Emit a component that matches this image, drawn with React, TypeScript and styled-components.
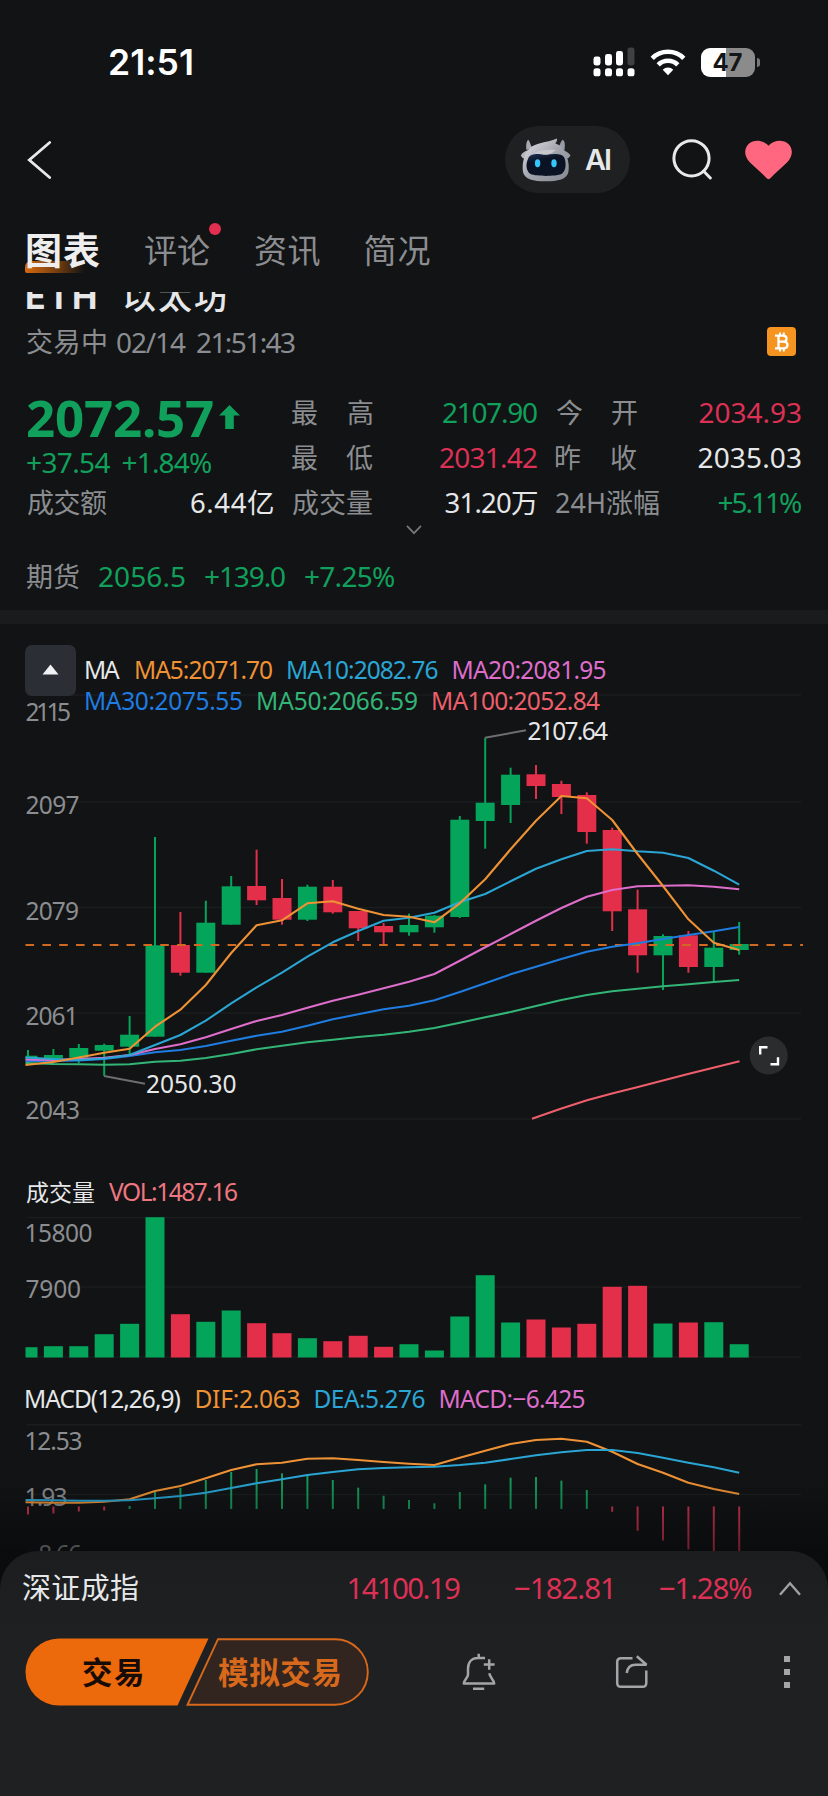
import React from 'react';
import styled, { createGlobalStyle } from 'styled-components';

const FONT = "'Noto Sans', 'Noto Sans CJK SC', sans-serif";
const UI_FONT = "Inter, 'Noto Sans', sans-serif";

const c = {
  bg: '#111314',
  sheet: '#1e2022',
  text: '#e6e7e9',
  muted: '#8b8d90',
  up: '#11a05c',
  down: '#dc3055',
  upFill: '#04a45a',
  downFill: '#e42f4a',
  orange: '#ef9235',
  cyan: '#2aa5d4',
  pink: '#de6dcb',
  blue: '#1f7ce0',
  green: '#33b577',
  red: '#ee5f6b',
  brand: '#ec690c',
  grid: '#1b1d1e',
};

const GlobalStyle = createGlobalStyle`
  html, body { margin: 0; padding: 0; background: ${c.bg}; }
  * { box-sizing: border-box; }
`;

/* ---------- text tracked to an exact ink width ---------- */

let ctx: CanvasRenderingContext2D | null = null;

function track(text: string, size: number, weight: number, family: string, width: number) {
  if (!ctx) ctx = document.createElement('canvas').getContext('2d');
  if (!ctx) return { spacing: 0, left: 0, right: 0 };
  ctx.font = `${weight} ${size}px ${family}`;
  const m = ctx.measureText(text);
  const ink = m.actualBoundingBoxLeft + m.actualBoundingBoxRight;
  const spacing = text.length > 1 ? (width - ink) / (text.length - 1) : 0;
  return {
    spacing,
    left: m.actualBoundingBoxLeft,
    right: -(m.width - m.actualBoundingBoxRight) - spacing,
  };
}

const Glyphs = styled.span<{ $size: number; $weight: number; $color: string; $family: string }>`
  display: block;
  flex: none;
  white-space: pre;
  font-family: ${(p) => p.$family};
  font-size: ${(p) => p.$size}px;
  font-weight: ${(p) => p.$weight};
  color: ${(p) => p.$color};
`;

type TextProps = {
  children: string;
  w: number;
  size?: number;
  weight?: number;
  color?: string;
  family?: string;
};

function Text({ children, w, size = 28, weight = 400, color = c.text, family = FONT }: TextProps) {
  const t = track(children, size, weight, family, w);
  return (
    <Glyphs
      $size={size}
      $weight={weight}
      $color={color}
      $family={family}
      style={{ letterSpacing: t.spacing, marginLeft: t.left, marginRight: t.right }}
    >
      {children}
    </Glyphs>
  );
}

function PlotText({ x, y, w, children, color = c.muted }: { x: number; y: number; w: number; children: string; color?: string }) {
  const t = track(children, 24.5, 400, FONT, w);
  return (
    <text x={x + t.left} y={y} fill={color} fontFamily={FONT} fontSize={24.5} style={{ letterSpacing: t.spacing }}>
      {children}
    </text>
  );
}

/* ---------- page parts ---------- */

const Page = styled.div`
  position: relative;
  width: 828px;
  height: 1796px;
  overflow: hidden;
  background: ${c.bg};
  color: ${c.text};
  font-family: ${FONT};
`;

const StatusBar = styled.header`
  display: flex;
  align-items: center;
  justify-content: space-between;
  height: 124px;
  padding: 0 68px 0 110px;
`;

const StatusIcons = styled.div`
  display: flex;
  align-items: center;
  gap: 15px;
`;

const Battery = styled.div`
  position: relative;
  display: flex;
  align-items: center;
  justify-content: center;
  width: 54px;
  height: 29px;
  margin-right: 5px;
  border-radius: 9px;
  background: linear-gradient(90deg, #fff 0 47%, #8b8b8b 47% 100%);
  &::after {
    content: '';
    position: absolute;
    right: -5px;
    top: 10px;
    width: 3px;
    height: 9px;
    border-radius: 0 4px 4px 0;
    background: #77797a;
  }
`;

const NavBar = styled.nav`
  display: flex;
  align-items: center;
  height: 67px;
  margin-top: 2px;
  padding: 0 36px 0 27px;
`;

const Spacer = styled.div`
  flex: 1;
`;

const AiPill = styled.div`
  display: flex;
  align-items: center;
  gap: 14px;
  width: 125px;
  height: 67px;
  margin-right: 42px;
  padding-left: 15px;
  border-radius: 34px;
  background: #1e2021;
`;

const HeartSlot = styled.div`
  display: flex;
  margin-left: 32px;
`;

const Tabs = styled.div`
  display: flex;
  align-items: center;
  height: 99px;
  padding: 16px 0 0 26px;
  line-height: 50px;
`;

const Tab = styled.div<{ $gap: number }>`
  position: relative;
  margin-right: ${(p) => p.$gap}px;
`;

const TabLine = styled.i`
  position: absolute;
  left: -1px;
  top: 35px;
  width: 60px;
  height: 12px;
  border-radius: 6px 0 0 2px;
  background: linear-gradient(90deg, #d8690f, #7b410f 50%, rgba(17, 19, 20, 0));
`;

const TabLabel = styled.div`
  position: relative;
  padding-left: 1px;
`;

const Dot = styled.i`
  position: absolute;
  right: -11px;
  top: -3px;
  width: 12px;
  height: 12px;
  border-radius: 50%;
  background: #e22f50;
`;

const Quote = styled.section`
  height: 318px;
  overflow: hidden;
  padding: 0 27px;
`;

const TitleRow = styled.div`
  display: flex;
  gap: 28px;
  height: 40px;
  margin-top: -15px;
  line-height: 39px;
`;

const StateRow = styled.div`
  display: flex;
  align-items: center;
  justify-content: space-between;
  height: 49px;
  padding-right: 5px;
  line-height: 36px;
`;

const Inline = styled.div<{ $gap: number }>`
  display: flex;
  align-items: center;
  gap: ${(p) => p.$gap}px;
`;

const CoinBadge = styled.div`
  display: flex;
  align-items: center;
  justify-content: center;
  width: 29px;
  height: 29px;
  border-radius: 4px;
  background: #f59420;
`;

const Stats = styled.div`
  display: grid;
  grid-template-columns: 246px 245px 245px;
  grid-template-rows: 45px 45px 45px;
  column-gap: 19px;
  margin-top: 24px;
  line-height: 45px;
`;

const PriceBlock = styled.div`
  grid-row: span 2;
`;

const PriceRow = styled.div`
  display: flex;
  align-items: center;
  gap: 6px;
  height: 54px;
  line-height: 52px;
`;

const ChangeRow = styled.div`
  display: flex;
  align-items: center;
  height: 36px;
  line-height: 35px;
`;

const Stat = styled.div`
  display: flex;
  justify-content: space-between;
`;

const SplitLabel = styled.div`
  display: flex;
  justify-content: space-between;
  width: 81px;
`;

const MoreRow = styled.div`
  display: flex;
  justify-content: center;
  height: 10px;
`;

const FuturesRow = styled.div`
  display: flex;
  align-items: center;
  gap: 20px;
  padding-top: 6px;
  height: 75px;
`;

const Divider = styled.div`
  height: 14px;
  background: #1a1b1d;
`;

const PricePane = styled.section`
  display: grid;
  & > * {
    grid-area: 1 / 1;
  }
`;

const Plot = styled.svg`
  display: block;
`;

const Legend = styled.div`
  position: relative;
  display: flex;
  align-items: flex-start;
  gap: 10px;
  padding: 21px 0 0 25px;
`;

const ToggleButton = styled.button`
  display: flex;
  align-items: center;
  justify-content: center;
  width: 51px;
  height: 51px;
  padding: 0 0 2px;
  border: 0;
  border-radius: 7px;
  background: #2b2e34;
`;

const LegendLines = styled.div`
  display: flex;
  flex-direction: column;
  padding-top: 9px;
  line-height: 31px;
`;

const LegendLine = styled.div`
  display: flex;
  gap: 16px;
`;

const LegendBar = styled.div<{ $gap: number }>`
  display: flex;
  align-items: center;
  gap: ${(p) => p.$gap}px;
  height: 36px;
  padding-left: 26px;
  line-height: 36px;
`;

const Sheet = styled.footer`
  position: absolute;
  left: 0;
  right: 0;
  bottom: 0;
  height: 245px;
  border-radius: 38px 38px 0 0;
  background: linear-gradient(180deg, #1b1d1e, ${c.sheet} 80px);
`;

const SheetShade = styled.div`
  position: absolute;
  left: 0;
  right: 0;
  bottom: 200px;
  height: 120px;
  background: linear-gradient(180deg, rgba(3, 4, 6, 0), rgba(3, 4, 6, 0.5) 65%);
`;

const IndexRow = styled.div`
  display: flex;
  align-items: center;
  height: 74px;
  padding: 0 26px 0 23px;
  line-height: 38px;
`;

const IndexValues = styled.div`
  display: flex;
  align-items: center;
  margin-left: auto;
`;

const Gap = styled.div<{ $w: number }>`
  width: ${(p) => p.$w}px;
  flex: none;
`;

const ActionRow = styled.div`
  display: flex;
  align-items: center;
  height: 67px;
  margin-top: 13px;
  padding-left: 25px;
`;

const TradeButtons = styled.div`
  display: grid;
  width: 345px;
  height: 68px;
  & > * {
    grid-area: 1 / 1;
  }
`;

const TradeLabels = styled.div`
  position: relative;
  display: flex;
  align-items: center;
  gap: 76px;
  padding-left: 58px;
  line-height: 66px;
`;

/* ---------- chart data: pixel levels inside the plots ---------- */

const step = 25.4;
const cx = (i: number) => 155 + (i - 5) * step;

// [wick top, body top, body bottom, wick bottom, rising]
const candles: [number, number, number, number, 0 | 1][] = [
  [1050, 1055.7, 1060, 1063, 1], [1049, 1055, 1058.5, 1060, 1], [1044, 1048, 1057.7, 1063, 1],
  [1043.7, 1045, 1050.7, 1076, 1], [1016, 1034.7, 1046.7, 1055, 1], [837, 945.3, 1036.7, 1036.7, 1],
  [912, 945, 972.7, 975.7, 0], [900.7, 922.7, 972.7, 972.7, 1], [876, 886.3, 924.7, 924.7, 1],
  [849.7, 886, 900.3, 905, 0], [879, 898, 919.7, 924.7, 0], [884.7, 886.7, 919.7, 921, 1],
  [880, 886.7, 912.3, 913.7, 0], [911, 911, 928.3, 941, 0], [923, 926, 932.3, 944.3, 0],
  [913.7, 925, 932.3, 935.7, 1], [915, 915.7, 927.3, 932.7, 1], [816, 819.7, 917, 918, 1],
  [737.7, 802.7, 821, 848.7, 1], [767.7, 774.7, 805, 823, 1], [765, 774.3, 786, 799, 0],
  [780.7, 784, 797, 814, 0], [792.3, 795, 832, 843.7, 0], [827.7, 830, 911.3, 931, 0],
  [889.7, 909.3, 955.3, 972.7, 0], [934.3, 936, 955.3, 990, 1], [931, 935.3, 967, 972.7, 0],
  [931.7, 947.7, 967, 981.7, 1], [922, 944, 950, 954.7, 1],
];

const ma5 = [1065, 1062, 1057.5, 1052.7, 1048.7, 1026.7, 1009.7, 985, 953, 925.3, 920.3, 903.3, 901.3, 908.7, 915, 916.7, 922.3, 903.3, 879.3, 849.3, 820.7, 796, 798.3, 820, 854, 886, 919.3, 942.7, 950];
const ma10 = [1057.5, 1059, 1060, 1058.5, 1055, 1045, 1035, 1020.7, 1003.3, 987.3, 972.7, 956.7, 942.3, 931, 920.7, 917.7, 912.7, 902.3, 894, 881.3, 868.7, 859.3, 851, 849.3, 851.3, 852.7, 858, 870.7, 884.7];
const ma20 = [1059.5, 1060, 1059, 1057.7, 1055, 1049, 1044.3, 1037.3, 1029, 1021, 1015, 1007.7, 1000.7, 994.7, 988.3, 981.7, 974, 960.7, 947.3, 934, 920.7, 908, 896.7, 890, 886.3, 885.7, 885.3, 886.7, 889.3];
const ma30 = [1061, 1061, 1060.5, 1059, 1056, 1052.3, 1050, 1046, 1040.7, 1035.7, 1031.7, 1025.7, 1019.3, 1014.3, 1009.3, 1005.7, 1000.3, 992, 983.3, 974.3, 966.7, 959, 951.7, 946.7, 943.3, 939, 935, 931.3, 927];
const ma50 = [1063, 1064, 1064.3, 1064.7, 1064.3, 1061.7, 1060.7, 1058, 1054, 1049.3, 1045.7, 1042.3, 1039.7, 1037, 1034.7, 1031.7, 1028, 1022.7, 1017.3, 1012, 1006, 1000, 995, 991.3, 988.7, 986.3, 984.3, 982, 980];

const volume: [number, 0 | 1][] = [
  [10.3, 1], [11.3, 1], [11.3, 1], [23.3, 1], [33.7, 1], [140.3, 1], [43.3, 0], [35.7, 1], [47, 1], [34.3, 0],
  [24.3, 0], [19.3, 1], [16.3, 0], [21.7, 0], [10.7, 0], [13.3, 1], [7, 1], [41, 1], [82.3, 1], [35, 1],
  [38, 0], [30, 0], [33.7, 0], [70.7, 0], [71.7, 0], [34, 1], [35, 0], [35.3, 1], [13.3, 1],
];

const macd = [-8, -7, -5, -4, 3, 17, 21, 29, 37, 40, 35.7, 34, 29, 21.3, 13.3, 9, 5.7, 17, 24.7, 31.3, 32, 28.3, 19, -5.3, -24.3, -34, -43, -52, -60];
const dif = [1502.3, 1502.7, 1502.7, 1501.7, 1499.3, 1491, 1486, 1478.3, 1470, 1464.3, 1462.7, 1458.7, 1458.3, 1460, 1462, 1463.7, 1465, 1457.7, 1450.7, 1444, 1440, 1438.7, 1441.7, 1451.7, 1464, 1472.7, 1482.7, 1489, 1494];
const dea = [1500, 1500.3, 1500.7, 1500.7, 1500.3, 1498.3, 1496, 1492.7, 1488, 1483.3, 1479.3, 1475, 1472, 1469.3, 1468, 1467.3, 1466.7, 1465, 1462.7, 1459, 1455.3, 1452.3, 1450, 1450, 1453, 1457.7, 1462.7, 1467.3, 1472.7];

function Line({ data, color }: { data: number[]; color: string }) {
  const pts = data.map((y, i) => `${(i === 0 ? 25.5 : cx(i)).toFixed(1)},${y}`).join(' ');
  return <polyline points={pts} fill="none" stroke={color} strokeWidth={2.1} strokeLinejoin="round" />;
}

const bodyX = (i: number) => Math.max(25.5, cx(i) - 9.5);
const bodyW = (i: number) => cx(i) + 9.5 - bodyX(i);

function GridLines({ ys }: { ys: number[] }) {
  return (
    <>
      {ys.map((y) => (
        <line key={y} x1={27} x2={801} y1={y} y2={y} stroke={c.grid} strokeWidth={1.5} />
      ))}
    </>
  );
}

function PricePlot() {
  return (
    <Plot width={828} height={550} viewBox="0 624 828 550">
      <GridLines ys={[695, 802, 907.5, 1013, 1119]} />
      <PlotText x={26.5} y={720.5} w={43.5}>2115</PlotText>
      <PlotText x={26.5} y={813.5} w={52}>2097</PlotText>
      <PlotText x={26.5} y={919.5} w={51.5}>2079</PlotText>
      <PlotText x={26.5} y={1025} w={47}>2061</PlotText>
      <PlotText x={26.5} y={1118.5} w={52.5}>2043</PlotText>
      {candles.map(([wt, bt, bb, wb, rising], i) => {
        const fill = rising ? c.upFill : c.downFill;
        return (
          <g key={i} fill={fill}>
            <rect x={cx(i) - 1} y={wt} width={2} height={wb - wt} />
            <rect x={bodyX(i)} y={bt} width={bodyW(i)} height={bb - bt} />
          </g>
        );
      })}
      <line x1={25.5} x2={803} y1={945} y2={945} stroke="#cf6a20" strokeWidth={1.8} strokeDasharray="8.6 8.24" />
      <Line data={ma50} color={c.green} />
      <Line data={ma30} color={c.blue} />
      <Line data={ma20} color={c.pink} />
      <Line data={ma10} color={c.cyan} />
      <Line data={ma5} color={c.orange} />
      <polyline points="532,1118.7 560,1109 587,1100.3 612,1093.5 637,1087.3 688,1074 739.5,1061.3" fill="none" stroke={c.red} strokeWidth={2.1} />
      <polyline points="485,737.7 526,730.3" stroke="#6c6e70" strokeWidth={1.9} />
      <polyline points="104,1076 145,1083.7" stroke="#6c6e70" strokeWidth={1.9} />
      <PlotText x={528.5} y={739.5} w={79.5} color={c.text}>2107.64</PlotText>
      <PlotText x={147} y={1093} w={88.5} color={c.text}>2050.30</PlotText>
      <circle cx={768.7} cy={1055.5} r={19} fill="#2b2c2e" />
      <path d="M760.2 1054.5V1047.2H767.5M778 1057.3V1064.3H770.5" fill="none" stroke="#fff" strokeWidth={2.4} />
    </Plot>
  );
}

function VolumePlot() {
  return (
    <Plot width={828} height={171} viewBox="0 1210 828 171">
      <GridLines ys={[1217.5, 1287, 1357]} />
      {volume.map(([h, rising], i) => (
        <rect key={i} x={bodyX(i)} y={1357.5 - h} width={bodyW(i)} height={h} fill={rising ? c.upFill : c.downFill} />
      ))}
      <PlotText x={26.5} y={1241.5} w={65}>15800</PlotText>
      <PlotText x={26.5} y={1298} w={53.5}>7900</PlotText>
    </Plot>
  );
}

function MacdPlot() {
  return (
    <Plot width={828} height={183} viewBox="0 1417 828 183">
      <GridLines ys={[1424.7, 1494.5]} />
      <PlotText x={26.5} y={1449.5} w={55}>12.53</PlotText>
      <PlotText x={26.5} y={1505.5} w={40}>1.93</PlotText>
      <PlotText x={27} y={1562.5} w={54}>−8.66</PlotText>
      {macd.map((v, i) => (
        <rect
          key={i}
          x={cx(i) - 1}
          y={v > 0 ? 1509 - v : 1506.5}
          width={2}
          height={Math.abs(v)}
          fill={v > 0 ? '#15995a' : '#cf3450'}
        />
      ))}
      <Line data={dif} color={c.orange} />
      <Line data={dea} color={c.cyan} />
    </Plot>
  );
}

/* ---------- icons ---------- */

const Signal = () => (
  <svg width="42" height="30" viewBox="0 0 42 30" fill="#fff">
    <rect x="0.5" y="9.5" width="7" height="9" rx="2.4" />
    <rect x="12" y="7" width="7" height="11.5" rx="2.4" />
    <rect x="23" y="4" width="7" height="14.5" rx="2.4" />
    <rect x="34.5" y="0.5" width="7" height="18" rx="2.4" fill="#3f4142" />
    {[0.5, 12, 23, 34.5].map((x) => (
      <rect key={x} x={x} y="21.3" width="7" height="8" rx="2.6" />
    ))}
  </svg>
);

const Wifi = () => (
  <svg width="36" height="28" viewBox="0 0 36 28" fill="none" stroke="#fff" strokeWidth="4.6">
    <path d="M2.2 10.3A22.5 22.5 0 0 1 33.8 10.3" />
    <path d="M8.2 16.8A14 14 0 0 1 27.8 16.8" />
    <path d="M12.7 21.7A7.8 7.8 0 0 1 23.3 21.7L18 27.2Z" fill="#fff" stroke="none" />
  </svg>
);

const Robot = () => (
  <svg width="51" height="46" viewBox="0 0 51 46">
    <defs>
      <linearGradient id="head" x1="0" y1="0" x2="1" y2="1">
        <stop offset="0" stopColor="#e4e5ea" />
        <stop offset="0.5" stopColor="#a2a5ad" />
        <stop offset="1" stopColor="#858992" />
      </linearGradient>
      <linearGradient id="visor" x1="0" y1="0" x2="0.4" y2="1">
        <stop offset="0" stopColor="#1d3152" />
        <stop offset="0.4" stopColor="#0a1223" />
        <stop offset="1" stopColor="#0b1424" />
      </linearGradient>
    </defs>
    <path d="M6.5 13C5.7 8 6.5 4 8.3 2.7C10.3 4.5 10.2 8 12.5 11Z" fill="#a6a9b0" />
    <path d="M38 10C40.6 8 40.2 4 43 2.7C45.4 5 45 9 44.5 13Z" fill="#989ba3" />
    <path d="M0.8 18.5C2.3 15.5 5 14 9 13L6 22L2.5 21Z" fill="#b5b7bd" />
    <path d="M50.5 18.5C48.5 15.5 46 14 42 13L45 22L48.5 21Z" fill="#999ca4" />
    <path d="M9 12C15 5.5 26 6 37 1.5C37.3 4 36.3 5.5 35.2 6.3C41 8.3 45.5 13 47 20C48.6 25 49.3 30 48.4 35C47 42.5 38 44.3 25.6 44.3C13.5 44.3 4.5 42.5 3 35C2.2 30 2.8 25 4.3 20C5.2 16.5 6.8 14.2 9 12Z" fill="url(#head)" />
    <path d="M8 22C10 15.5 18 17.2 26 17.2C34 17.2 42 15.5 44.5 21C46.500 27 46 34 41.500 37C35 39.500 17 39.500 10.500 37C6 34 5.500 27 8 22Z" fill="url(#visor)" />
    <path d="M14 16.500C18 13.500 27 12 36 13L31 16.500C28 18 25 18 21 17.200Z" fill="#c6c8ce" />
    <ellipse cx="17.600" cy="26.300" rx="2.700" ry="4" fill="#35c5fb" />
    <ellipse cx="34" cy="26.300" rx="2.700" ry="4" fill="#35c5fb" />
  </svg>
);

const BellPlus = () => (
  <svg width="34" height="38" viewBox="0 0 34 38" fill="none" stroke="#a4a5a6" strokeWidth="2.5">
    <path d="M16.7 0.8V4.5M23 5H16C9.5 5 6 9.5 6 15.5V21.5C6 25 1.8 27 1.8 30.5H32.2C32.2 27 28 25 27.3 20.3" strokeLinejoin="round" />
    <path d="M27.2 6.2V16.8M21.8 11.5H32.6M11 35.7H22.2" />
  </svg>
);

const Share = () => (
  <svg width="34" height="34" viewBox="0 0 34 34" fill="none" stroke="#a4a5a6" strokeWidth="2.5">
    <path d="M17.5 3.2H6Q2.2 3.2 2.2 7V28Q2.2 31.8 6 31.8H27.5Q31.3 31.8 31.3 28V15.5" />
    <path d="M11.7 18C12.5 12.5 15.5 9.7 20.5 9.7H31.5L21.8 1.3" strokeLinejoin="bevel" />
  </svg>
);

/* ---------- app ---------- */

const L = ({ children, w }: { children: string; w: number }) => (
  <Text w={w} size={27} color={c.muted}>{children}</Text>
);

const Pair = ({ a, b }: { a: string; b: string }) => (
  <SplitLabel>
    <L w={25}>{a}</L>
    <L w={25}>{b}</L>
  </SplitLabel>
);

export default function App() {
  return (
    <Page>
      <GlobalStyle />
      <StatusBar>
        <Text w={82} size={35.5} weight={600} color="#fff" family={UI_FONT}>21:51</Text>
        <StatusIcons>
          <Signal />
          <Wifi />
          <Battery>
            <Text w={29} size={24} weight={700} color="#151617" family={UI_FONT}>47</Text>
          </Battery>
        </StatusIcons>
      </StatusBar>

      <NavBar>
        <svg width="26" height="40" viewBox="0 0 26 40" fill="none" stroke="#e8e9ea" strokeWidth="2.8" strokeLinecap="round">
          <path d="M22.7 2.5L2.3 20L22.7 37.5" />
        </svg>
        <Spacer />
        <AiPill>
          <Robot />
          <Text w={25} size={29} weight={600} family={UI_FONT}>AI</Text>
        </AiPill>
        <svg width="41" height="41" viewBox="0 0 41 41" fill="none" stroke="#e8e9ea" strokeWidth="3" strokeLinecap="round">
          <circle cx="19.5" cy="19.3" r="17.6" />
          <path d="M31.5 32L38.3 39" />
        </svg>
        <HeartSlot>
          <svg width="47" height="40" viewBox="0 0 47 40">
            <path d="M23.5 39.3C22 39.3 20.5 37 18 34.6L5 22.5C-1 16.5 -1.3 9 3.6 4C9 -0.9 18 -0.3 23.5 5.8C29 -0.3 38 -0.9 43.4 4C48.3 9 48 16.5 42 22.5L29 34.6C26.5 37 25 39.3 23.5 39.3Z" fill="#ff6781" />
          </svg>
        </HeartSlot>
      </NavBar>

      <Tabs>
        <Tab $gap={45}>
          <TabLine />
          <TabLabel><Text w={73} size={37} weight={700} color="#eeeeef">图表</Text></TabLabel>
        </Tab>
        <Tab $gap={45}>
          <Text w={65} size={33} color={c.muted}>评论</Text>
          <Dot />
        </Tab>
        <Tab $gap={45}><Text w={64.5} size={33} color={c.muted}>资讯</Text></Tab>
        <Tab $gap={0}><Text w={65} size={33} color={c.muted}>简况</Text></Tab>
      </Tabs>

      <Quote>
        <TitleRow>
          <Text w={69} size={34} weight={700} family={UI_FONT}>ETH</Text>
          <Text w={103} size={34} weight={500}>以太坊</Text>
        </TitleRow>
        <StateRow>
          <Inline $gap={11}>
            <L w={79}>交易中</L>
            <Text w={69} color={c.muted}>02/14</Text>
            <Text w={98} color={c.muted}>21:51:43</Text>
          </Inline>
          <CoinBadge>
            <svg width="16" height="20" viewBox="0 0 16 20" fill="none" stroke="#fff" strokeWidth="2.3">
              <path d="M1 3.7H9Q12.5 3.7 12.5 6.7Q12.5 9.7 9 9.7H4.5M9 9.7Q13.5 9.7 13.5 13Q13.5 16.3 9.5 16.3H1M4.5 3.7V16.3" />
              <path d="M6 0.5V3.5M9.8 0.5V3.5M6 16.5V19.5M9.8 16.5V19.5" strokeWidth="1.9" />
            </svg>
          </CoinBadge>
        </StateRow>

        <Stats>
          <PriceBlock>
            <PriceRow>
              <Text w={186} size={51} weight={700} color={c.up}>2072.57</Text>
              <svg width="21" height="25" viewBox="0 0 21 25" fill={c.up}>
                <path d="M10.5 0L21 10.5H14.8V24H6.2V10.5H0Z" />
              </svg>
            </PriceRow>
            <ChangeRow>
              <Inline $gap={12}>
                <Text w={83.5} color={c.up}>+37.54</Text>
                <Text w={88.5} color={c.up}>+1.84%</Text>
              </Inline>
            </ChangeRow>
          </PriceBlock>
          <Stat><Pair a="最" b="高" /><Text w={94} color={c.up}>2107.90</Text></Stat>
          <Stat><Pair a="今" b="开" /><Text w={101.5} color={c.down}>2034.93</Text></Stat>
          <Stat><Pair a="最" b="低" /><Text w={97} color={c.down}>2031.42</Text></Stat>
          <Stat><Pair a="昨" b="收" /><Text w={102.5} color={c.text}>2035.03</Text></Stat>
          <Stat>
            <L w={80}>成交额</L>
            <Text w={82} size={27.5} color={c.text}>6.44亿</Text>
          </Stat>
          <Stat>
            <L w={80}>成交量</L>
            <Text w={91.5} size={27.5} color={c.text}>31.20万</Text>
          </Stat>
          <Stat>
            <L w={103}>24H涨幅</L>
            <Text w={82.5} color={c.up}>+5.11%</Text>
          </Stat>
        </Stats>
        <MoreRow>
          <svg width="16" height="10" viewBox="0 0 16 10" fill="none" stroke="#77797b" strokeWidth="1.7">
            <path d="M1 0.8L8 8.2L15 0.8" />
          </svg>
        </MoreRow>
        <FuturesRow>
          <L w={52}>期货</L>
          <Text w={86} color={c.up}>2056.5</Text>
          <Text w={80} color={c.up}>+139.0</Text>
          <Text w={89} color={c.up}>+7.25%</Text>
        </FuturesRow>
      </Quote>
      <Divider />

      <PricePane>
        <PricePlot />
        <Legend>
          <ToggleButton aria-label="收起">
            <svg width="17" height="11" viewBox="0 0 17 11" fill="#f1f2f3">
              <path d="M8.5 0.5L16.5 10.5H0.5Z" />
            </svg>
          </ToggleButton>
          <LegendLines>
            <LegendLine>
              <Text w={34} size={24.5}>MA</Text>
              <Text w={136} size={24.5} color={c.orange}>MA5:2071.70</Text>
              <Text w={149.5} size={24.5} color={c.cyan}>MA10:2082.76</Text>
              <Text w={152} size={24.5} color={c.pink}>MA20:2081.95</Text>
            </LegendLine>
            <LegendLine>
              <Text w={156} size={24.5} color={c.blue}>MA30:2075.55</Text>
              <Text w={159} size={24.5} color={c.green}>MA50:2066.59</Text>
              <Text w={167} size={24.5} color={c.red}>MA100:2052.84</Text>
            </LegendLine>
          </LegendLines>
        </Legend>
      </PricePane>

      <LegendBar $gap={15}>
        <Text w={68} size={23} color={c.text}>成交量</Text>
        <Text w={128} size={24.5} color="#ee7681">VOL:1487.16</Text>
      </LegendBar>
      <VolumePlot />
      <LegendBar $gap={16}>
        <Text w={154.5} size={24.5}>MACD(12,26,9)</Text>
        <Text w={103} size={24.5} color={c.orange}>DIF:2.063</Text>
        <Text w={109} size={24.5} color={c.cyan}>DEA:5.276</Text>
        <Text w={144} size={24.5} color={c.pink}>MACD:−6.425</Text>
      </LegendBar>
      <MacdPlot />

      <SheetShade />
      <Sheet>
        <IndexRow>
          <Text w={115} size={29}>深证成指</Text>
          <IndexValues>
            <Text w={111.5} size={29.5} color={c.down}>14100.19</Text>
            <Gap $w={55} />
            <Text w={96} size={29.5} color={c.down}>−182.81</Text>
            <Gap $w={49} />
            <Text w={92} size={29.5} color={c.down}>−1.28%</Text>
            <Gap $w={26} />
            <svg width="24" height="15" viewBox="0 0 24 15" fill="none" stroke="#a0a1a3" strokeWidth="2.4">
              <path d="M2 13.7L12 2.3L22 13.7" />
            </svg>
          </IndexValues>
        </IndexRow>
        <ActionRow>
          <TradeButtons>
            <svg width="345" height="68" viewBox="0 0 345 68">
              <path d="M34 0.5H183.5L152.5 67.5H34A33.5 33.5 0 0 1 34 0.5Z" fill={c.brand} />
              <path d="M193 1.2H310A32.8 32.8 0 0 1 310 66.8H162.5Z" fill="#32241e" stroke="#d7691c" strokeWidth="1.9" />
            </svg>
            <TradeLabels>
              <Text w={59} size={30.5} weight={700} color="#160b06">交易</Text>
              <Text w={121.5} size={30.5} weight={700} color="#d7691c">模拟交易</Text>
            </TradeLabels>
          </TradeButtons>
          <Gap $w={92} />
          <BellPlus />
          <Gap $w={119} />
          <Share />
          <Gap $w={134} />
          <svg width="8" height="34" viewBox="0 0 8 34" fill="#a4a5a6">
            <rect x="1" y="1" width="6" height="6" />
            <rect x="1" y="14" width="6" height="6" />
            <rect x="1" y="27" width="6" height="6" />
          </svg>
        </ActionRow>
      </Sheet>
    </Page>
  );
}
